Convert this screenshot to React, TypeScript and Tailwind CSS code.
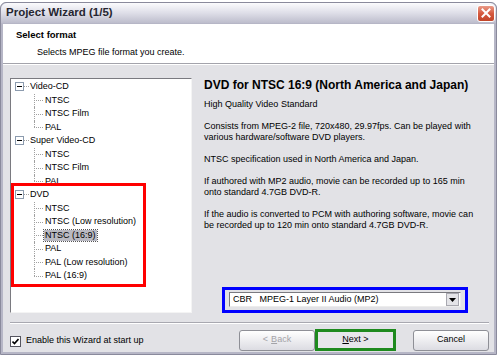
const font = { fontFamily: '"Liberation Sans", Arial, sans-serif' };

type Node = { label: string; children: string[] };

const tree: Node[] = [
  { label: "Video-CD", children: ["NTSC", "NTSC Film", "PAL"] },
  { label: "Super Video-CD", children: ["NTSC", "NTSC Film", "PAL"] },
  {
    label: "DVD",
    children: [
      "NTSC",
      "NTSC (Low resolution)",
      "NTSC (16:9)",
      "PAL",
      "PAL (Low resolution)",
      "PAL (16:9)",
    ],
  },
];

function Expander() {
  return (
    <div className="w-[9px] h-[9px] border border-[#8c9bae] bg-white flex items-center justify-center">
      <div className="w-[5px] h-px bg-black" />
    </div>
  );
}

function RootRow({ label }: { label: string }) {
  return (
    <div className="h-[13.5px] flex items-center pl-[4px]">
      <Expander />
      <div className="w-[5px] border-t border-dotted border-[#a0a0a0]" />
      <span className="ml-px leading-none">{label}</span>
    </div>
  );
}

function ChildRow({ label, last, selected }: { label: string; last: boolean; selected?: boolean }) {
  return (
    <div className="h-[13.5px] flex items-center">
      <div className="w-[23px] shrink-0" />
      <div className="relative w-[9px] h-full shrink-0">
        <div
          className={`absolute left-0 top-0 border-l border-dotted border-[#a0a0a0] ${
            last ? "h-1/2" : "h-full"
          }`}
        />
        <div className="absolute left-0 top-1/2 w-full border-t border-dotted border-[#a0a0a0]" />
      </div>
      <span
        className={
          selected
            ? "ml-px px-px leading-[11px] bg-[#b9b9c2] outline outline-1 outline-dotted outline-[#555]"
            : "ml-[2px] leading-none"
        }
      >
        {label}
      </span>
    </div>
  );
}

function Button({ children, disabled }: { children: React.ReactNode; disabled?: boolean }) {
  return (
    <div
      className={`w-[76px] h-[21px] flex items-center justify-center rounded-[3px] border border-[#8e8f96] bg-gradient-to-b from-white to-[#dcdce2] text-[9px] ${
        disabled ? "text-[#a3a3a8]" : "text-black"
      }`}
    >
      {children}
    </div>
  );
}

export default function App() {
  return (
    <div className="w-[500px] h-[358px] bg-white text-black text-[9px]" style={font}>
      <div className="mt-[2px] w-[497px] h-[353px] flex flex-col rounded-t-[6px] bg-[#b6b6c6] border border-[#8a8a9c]">
        {/* Title bar */}
        <div className="h-[20px] flex items-center justify-between pl-[5px] pr-[1px] rounded-t-[6px] bg-gradient-to-b from-[#fbfbfd] via-[#dedee8] to-[#bdbdcc]">
          <span className="text-[11.5px] font-bold text-[#262630]">Project Wizard (1/5)</span>
          <div className="w-[18px] h-[17px] rounded-[3px] border border-white bg-gradient-to-b from-[#e99a88] via-[#d5593f] to-[#c24428] flex items-center justify-center">
            <svg width="10" height="10" viewBox="0 0 10 10">
              <path d="M1.5 1.5 L8.5 8.5 M8.5 1.5 L1.5 8.5" stroke="white" strokeWidth="2" strokeLinecap="square" />
            </svg>
          </div>
        </div>

        <div className="flex-1 mx-[2px] mb-[2px] mt-px flex flex-col bg-[#e2e2e6]">
          {/* Header */}
          <div className="h-[40px] bg-white pt-[5px] border-b border-[#a3a3ab]">
            <div className="pl-[13px] text-[9.5px] font-bold leading-[12px]">Select format</div>
            <div className="pl-[34px] mt-[6px] leading-[11px]">Selects MPEG file format you create.</div>
          </div>
          <div className="h-px bg-white" />

          {/* Body */}
          <div className="flex pt-[13px] pl-[7px]">
            <div className="relative w-[182px] h-[235px] pt-[1px] bg-white border border-t-[#7a7a80] border-l-[#7a7a80] border-b-[#f4f4f4] border-r-[#f4f4f4]">
              {tree.map((n) => (
                <div key={n.label}>
                  <RootRow label={n.label} />
                  {n.children.map((c, i) => (
                    <ChildRow
                      key={c}
                      label={c}
                      last={i === n.children.length - 1}
                      selected={n.label === "DVD" && c === "NTSC (16:9)"}
                    />
                  ))}
                </div>
              ))}
              <div className="absolute left-0 top-[104px] w-[135px] h-[104px] border-[3px] border-[#ff0000]" />
            </div>

            <div className="ml-[12px] w-[278px] h-[235px] flex flex-col justify-between">
              <div>
                <div className="text-[12px] font-bold leading-[14px]">
                  DVD for NTSC 16:9 (North America and Japan)
                </div>
                <div className="mt-[7px] leading-[11px] flex flex-col gap-[11px]">
                  <p>High Quality Video Standard</p>
                  <p>
                    Consists from MPEG-2 file, 720x480, 29.97fps. Can be played with various
                    hardware/software DVD players.
                  </p>
                  <p>NTSC specification used in North America and Japan.</p>
                  <p>
                    If authored with MP2 audio, movie can be recorded up to 165 min onto standard
                    4.7GB DVD-R.
                  </p>
                  <p>
                    If the audio is converted to PCM with authoring software, movie can be recorded
                    up to 120 min onto standard 4.7GB DVD-R.
                  </p>
                </div>
              </div>

              <div className="ml-[18px] w-[246px] h-[26px] border-[3px] border-[#0000ff] px-[4px] pt-[2px]">
                <div className="h-[15px] flex items-center bg-white border border-t-[#7a7a80] border-l-[#7a7a80] border-b-[#ececec] border-r-[#ececec]">
                  <span className="flex-1 pl-[3px] whitespace-pre leading-none">
                    {"CBR   MPEG-1 Layer II Audio (MP2)"}
                  </span>
                  <div className="w-[13px] h-[13px] mr-px bg-[#e4e4e8] border border-[#a8a8b0] flex items-center justify-center">
                    <svg width="7" height="4" viewBox="0 0 7 4">
                      <path d="M0 0 H7 L3.5 4 Z" fill="black" />
                    </svg>
                  </div>
                </div>
              </div>
            </div>
          </div>

          {/* Separator */}
          <div className="mt-[9px] ml-[7px] mr-[5px] border-t border-[#a8a8b0] border-b border-b-white" />

          {/* Footer */}
          <div className="flex items-center justify-between pl-[7px] pr-[5px] mt-[5px]">
            <div className="flex items-center gap-[5px] mt-[2px]">
              <div className="w-[11px] h-[11px] border border-[#55555f] bg-white flex items-center justify-center">
                <svg width="7" height="7" viewBox="0 0 7 7">
                  <path d="M0.5 3.5 L2.5 5.5 L6.5 1" stroke="black" strokeWidth="1.6" fill="none" />
                </svg>
              </div>
              <span>Enable this Wizard at start up</span>
            </div>
            <div className="flex items-center">
              <Button disabled>
                &lt; <span className="underline ml-[3px]">B</span>ack
              </Button>
              <div className="w-[81px] h-[22px] border-[3px] border-[#1e8a1e] bg-[#e6e6ea] flex items-center justify-center">
                <span>
                  <span className="underline">N</span>ext &gt;
                </span>
              </div>
              <div className="ml-[17px]">
                <Button>Cancel</Button>
              </div>
            </div>
          </div>
        </div>
      </div>
    </div>
  );
}
